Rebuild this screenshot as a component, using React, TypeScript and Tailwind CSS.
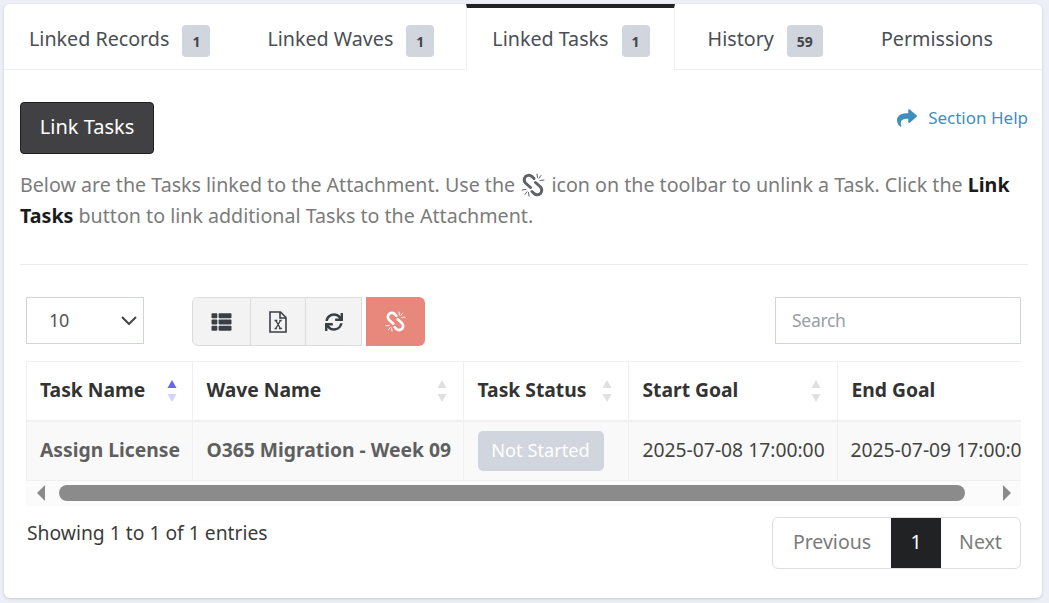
/**
 * Linked Tasks tab of an attachment record: tabs, toolbar and task table.
 */
import React from 'react';
import { FaShare, FaSync, FaThList } from 'react-icons/fa';

const ExcelIcon: React.FC = () => (
  <svg width="18" height="22" viewBox="0 0 18 22" fill="none" stroke="#3a3f46" strokeWidth="1.6">
    <path d="M1 1h10.5L17 6.5V21H1z" />
    <path d="M11 1v6h6" />
    <path d="M5.500 9.500h2.800M10.300 9.500h2.400M5.500 17.500h2.400M10 17.500h2.900M6.800 9.500l4.600 8M11.500 9.500l-4.700 8" strokeWidth="1.3" />
  </svg>
);

// font-awesome 4 style broken chain: two hooks and two groups of sparks
const UnlinkIcon: React.FC<{ className?: string }> = ({ className }) => (
  <svg viewBox="0 0 24 24" fill="none" stroke="currentColor" className={className}>
    <g strokeWidth="3" strokeLinecap="round">
      <path d="M13 5.500L11 3.500Q8 1 4.500 3.500Q2 7 4.500 10L9.500 14.500" />
      <path d="M14.500 9.500L19.500 14Q22 17 19.500 20.500Q16 23 13 20.500L11 18.500" />
    </g>
    <g strokeWidth="1" strokeLinecap="round">
      <path d="M16 1L16.500 4.500M20 2.500L18 5.300M23 7L19 7.500" />
      <path d="M8 23L7.500 19.500M4 21.500L6 18.700M1 17L5 16.500" />
    </g>
  </svg>
);

const SortArrows: React.FC<{ active?: boolean; className?: string }> = ({ active, className }) => (
  <svg width="10" height="24" viewBox="0 0 10 24" className={className}>
    <path d="M5 1l4.500 8H0.500z" fill={active ? '#6a64f5' : '#e0e0e0'} />
    <path d="M5 23l4.500-8H0.500z" fill={active ? '#d3d1fb' : '#e0e0e0'} />
  </svg>
);

const Tab: React.FC<{ label: string; count?: string; active?: boolean; className?: string }> = ({
  label,
  count,
  active,
  className,
}) => (
  <div
    className={
      active
        ? 'flex h-[66px] items-center gap-[13px] border-x border-[#f0f0f0] border-t-4 border-t-[#212224] bg-white pl-[25px] pr-[24px] -mb-px ' + (className ?? '')
        : 'flex h-[65px] items-center gap-[13px] px-[25px] pt-[5px] ' + (className ?? '')
    }
  >
    <span className="text-[19.700px] text-[#4a4e55]">{label}</span>
    {count && (
      <span className="mt-[4px] flex h-[32px] min-w-[28px] items-center justify-center rounded-[4px] bg-[#d1d5de] px-[10px] text-[14px] font-bold text-[#44464b]">
        {count}
      </span>
    )}
  </div>
);

const Th: React.FC<{ label: string; active?: boolean; arrowsAt: string }> = ({ label, active, arrowsAt }) => (
  <th className="relative border-r border-[#f0f0f0] pl-[14px] text-left font-bold text-[#333333]">
    {label}
    <SortArrows active={active} className={'absolute top-[17px] ' + arrowsAt} />
  </th>
);

export default function App() {
  return (
    <div className="h-[603px] w-[1049px] overflow-hidden bg-[#eceff5] pt-[4px] pl-[4px] font-['Noto_Sans',sans-serif] text-[19.300px]">
      <div className="h-[594px] w-[1038px] rounded-[6px] bg-white shadow-[0_1px_3px_rgba(0,0,0,0.15)]">
        {/* Tabs */}
        <div className="flex h-[66px] border-b border-[#f0f0f0]">
          <Tab label="Linked Records" count="1" />
          <Tab label="Linked Waves" count="1" className="ml-[7px]" />
          <Tab label="Linked Tasks" count="1" active className="ml-[7px]" />
          <Tab label="History" count="59" className="ml-[8px]" />
          <Tab label="Permissions" className="ml-[8px]" />
        </div>

        <div className="pl-[16px] pr-[14px] pt-[32px]">
          {/* Action row */}
          <div className="flex items-start justify-between">
            <button className="h-[52px] w-[134px] rounded-[4px] border border-[#1f1f20] bg-[#414143] pb-[2px] text-[20px] text-white">
              Link Tasks
            </button>
            <a className="mt-[3px] flex items-center gap-[11px] text-[17px] text-[#3f8fbe]">
              <FaShare className="h-[20px] w-[20px]" />
              Section Help
            </a>
          </div>

          {/* Intro */}
          <p className="mt-[15px] text-[19.650px] leading-[31px] text-[#7b7b7b]">
            Below are the Tasks linked to the Attachment. Use the{' '}
            <UnlinkIcon className="mx-[1px] inline h-[24px] w-[24px] align-[-5px] text-[#5f6368]" /> icon on the toolbar to
            unlink a Task. Click the <b className="text-[#1b1b1b]">Link Tasks</b> button to link additional Tasks to the
            Attachment.
          </p>
          <hr className="mt-[33px] border-[#eeeeee]" />

          <div className="pl-[6px] pr-[7px]">
            {/* Toolbar */}
            <div className="mt-[32px] flex items-start">
              <div className="flex h-[47px] w-[118px] items-center justify-between border border-[#d1d3e2] pl-[22px] pr-[6px] text-[18px] tracking-[-0.3px] text-[#555555]">
                10
                <svg width="16" height="9" viewBox="0 0 16 9" fill="none" stroke="#444444" strokeWidth="2">
                  <path d="M1 1l7 7 7-7" />
                </svg>
              </div>
              <div className="ml-[48px] flex h-[49px] w-[170px] overflow-hidden rounded-l-[6px] border border-[#dcdcdc] bg-[#f3f3f3] text-[#3a3f46]">
                <div className="flex w-[58px] items-center justify-center border-r border-[#dcdcdc]">
                  <FaThList className="h-[20px] w-[21px]" />
                </div>
                <div className="flex w-[55px] items-center justify-center border-r border-[#dcdcdc]">
                  <ExcelIcon />
                </div>
                <div className="flex flex-1 items-center justify-center">
                  <FaSync className="h-[18px] w-[18px]" />
                </div>
              </div>
              <div className="ml-[4px] flex h-[49px] w-[59px] items-center justify-center rounded-r-[6px] bg-[#e8877b] text-white">
                <UnlinkIcon className="h-[21px] w-[21px]" />
              </div>
              <div className="ml-auto flex h-[47px] w-[246px] items-center border border-[#d1d3e2] pl-[16px] pb-[1px] text-[17.500px] tracking-[-0.3px] text-[#9a9ea6]">
                Search
              </div>
            </div>

            {/* Table */}
            <div className="mt-[15px] w-[995px] overflow-hidden border-l border-[#f0f0f0]">
              <table className="-ml-px w-[1205px] table-fixed border-collapse">
                <colgroup>
                  <col className="w-[166px]" />
                  <col className="w-[271px]" />
                  <col className="w-[165px]" />
                  <col className="w-[209px]" />
                  <col className="w-[394px]" />
                </colgroup>
                <thead>
                  <tr className="h-[59px] border-y-2 border-t border-[#f0f0f0]">
                    <Th label="Task Name" active arrowsAt="left-[141px]" />
                    <Th label="Wave Name" arrowsAt="left-[244px]" />
                    <Th label="Task Status" arrowsAt="left-[138px]" />
                    <Th label="Start Goal" arrowsAt="left-[182px]" />
                    <Th label="End Goal" arrowsAt="left-[183px]" />
                  </tr>
                </thead>
                <tbody>
                  <tr className="h-[59px] bg-[#f9f9f9]">
                    <td className="border-r border-[#f0f0f0] pl-[14px] font-bold whitespace-nowrap text-[#5f5f5f]">Assign License</td>
                    <td className="whitespace-nowrap border-r border-[#f0f0f0] pl-[14px] font-bold text-[#5f5f5f]">
                      O365 Migration - Week 09
                    </td>
                    <td className="border-r border-[#f0f0f0] pl-[14px]">
                      <span className="flex h-[40px] w-[126px] items-center justify-center rounded-[5px] bg-[#d1d5de] text-[18.200px] text-white">
                        Not Started
                      </span>
                    </td>
                    <td className="border-r border-[#f0f0f0] pl-[14px] whitespace-nowrap text-[#444444]">2025-07-08 17:00:00</td>
                    <td className="pl-[13px] whitespace-nowrap text-[#444444]">2025-07-09 17:00:00</td>
                  </tr>
                </tbody>
              </table>
            </div>

            {/* Scrollbar */}
            <div className="flex h-[26px] w-[995px] items-center border-t border-[#f0f0f0] bg-[#fbfbfb] pl-[11px] pr-[10px]">
              <svg width="8" height="16" viewBox="0 0 8 16" className="shrink-0">
                <path d="M8 0v16L0 8z" fill="#8b8b8b" />
              </svg>
              <div className="ml-[14px] h-[16px] w-[906px] rounded-full bg-[#8b8b8b]" />
              <svg width="8" height="16" viewBox="0 0 8 16" className="ml-auto shrink-0">
                <path d="M0 0v16l8-8z" fill="#8b8b8b" />
              </svg>
            </div>

            {/* Footer */}
            <div className="mt-[11px] flex items-start justify-between">
              <span className="mt-[2px] ml-px text-[#3b3b3b]">Showing 1 to 1 of 1 entries</span>
              <div className="flex h-[52px] overflow-hidden rounded-[6px] border border-[#dedede] pb-[2px] text-[19.500px] text-[#7b7b7b]">
                <div className="flex w-[118px] items-center justify-center">Previous</div>
                <div className="-my-px -mb-[3px] flex w-[50px] items-center justify-center bg-[#212224] pb-[2px] text-white">1</div>
                <div className="flex w-[79px] items-center justify-center">Next</div>
              </div>
            </div>
          </div>
        </div>
      </div>
    </div>
  );
}
